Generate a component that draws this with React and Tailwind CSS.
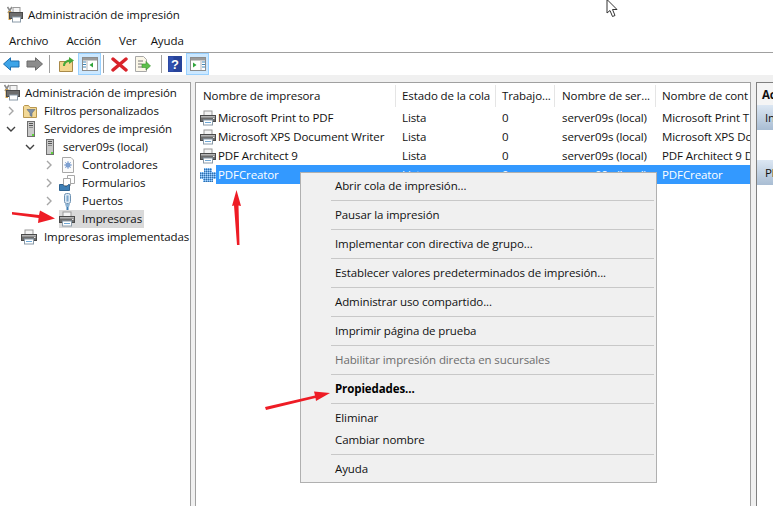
import React from "react";

const F = '[font-family:"Open_Sans","Noto_Sans",sans-serif]';

function Printer({ className = "" }) {
  return (
    <svg width="16" height="16" viewBox="0 0 16 16" className={className}>
      <rect x="4" y="1" width="8" height="5" fill="#f4f4f4" stroke="#9a9a9a" />
      <rect x="0.5" y="5.5" width="15" height="6" fill="#6d6d6d" stroke="#4a4a4a" />
      <rect x="1" y="6" width="14" height="1.5" fill="#b5b5b5" />
      <rect x="13" y="8" width="1.5" height="1" fill="#e5e5e5" />
      <rect x="3.5" y="10" width="9" height="5" fill="#ffffff" stroke="#8a9aa8" />
      <rect x="5" y="12" width="6" height="1" fill="#6fa8d6" />
    </svg>
  );
}

function PrinterSel() {
  return (
    <svg width="16" height="16" viewBox="0 0 16 16">
      <defs>
        <pattern id="dith" width="2" height="2" patternUnits="userSpaceOnUse">
          <rect width="2" height="2" fill="#5aa6ee" />
          <rect width="1" height="1" fill="#3f6f9f" />
          <rect x="1" y="1" width="1" height="1" fill="#b9d6f2" />
        </pattern>
      </defs>
      <rect x="4" y="1" width="8" height="5" fill="url(#dith)" />
      <rect x="0" y="5" width="16" height="7" fill="url(#dith)" />
      <rect x="3" y="11" width="10" height="4" fill="url(#dith)" />
    </svg>
  );
}

function Chevron({ open }) {
  return (
    <svg width="10" height="10" viewBox="0 0 10 10" fill="none" stroke={open ? "#404040" : "#a6a6a6"} strokeWidth="1.4">
      {open ? <path d="M1 3l4 4 4-4" /> : <path d="M3 1l4 4-4 4" />}
    </svg>
  );
}

function Server() {
  return (
    <svg width="16" height="16" viewBox="0 0 16 16">
      <rect x="6.5" y="0.5" width="7" height="15" fill="#c9c9c9" stroke="#6f6f6f" />
      <rect x="8" y="2" width="4" height="1" fill="#555" />
      <rect x="8" y="4" width="4" height="1" fill="#555" />
      <rect x="8" y="6" width="4" height="1" fill="#8a8a8a" />
      <rect x="11" y="13" width="2" height="2" fill="#5fd23c" />
    </svg>
  );
}

function RootIcon() {
  return (
    <svg width="16" height="18" viewBox="0 0 16 18">
      <path d="M0.5 1l4 6M5 1L1 7" stroke="#8a8a8a" strokeWidth="1.6" />
      <rect x="1.5" y="5" width="2.4" height="9" fill="#d9a441" />
      <rect x="6" y="1.5" width="7" height="5" fill="#f4f4f4" stroke="#9a9a9a" />
      <rect x="2.5" y="6.5" width="13" height="6" fill="#6d6d6d" stroke="#4a4a4a" />
      <rect x="5.5" y="11" width="8" height="5" fill="#fff" stroke="#8a9aa8" />
    </svg>
  );
}

function FilterFolder() {
  return (
    <svg width="16" height="16" viewBox="0 0 16 16">
      <path d="M2.5 3.5V14.5H15.5V4.5H9L7.5 2.5H3.5Z" fill="#f2d896" stroke="#b8974f" />
      <path d="M6 6.5h8L11 10v3.5L9 12.5V10Z" fill="#7e8fa6" stroke="#5c6b80" strokeWidth="0.6" />
    </svg>
  );
}

function DriversIcon() {
  return (
    <svg width="16" height="16" viewBox="0 0 16 16">
      <path d="M3.5 0.5H12L14.5 3V15.5H3.5Z" fill="#fbfbfb" stroke="#a8a8a8" />
      <circle cx="9" cy="8" r="2.6" fill="#7d9fd0" />
      <circle cx="9" cy="8" r="1" fill="#fff" />
      <path d="M9 4v8M5 8h8M6.2 5.2l5.6 5.6M11.8 5.2l-5.6 5.6" stroke="#7d9fd0" strokeWidth="0.9" />
    </svg>
  );
}

function FormsIcon() {
  return (
    <svg width="16" height="16" viewBox="0 0 16 16">
      <path d="M8.5 0.5H15.5V8.5H8.5Z" fill="#fff" stroke="#a8a8a8" />
      <path d="M4.5 3.5H11.5V10.5H4.5Z" fill="#fff" stroke="#a8a8a8" />
      <path d="M0.5 9.5H4L5.5 11.5H8L9.5 9.5H10.5V15.5H0.5Z" fill="#3f7fb5" stroke="#2f6391" />
    </svg>
  );
}

function PortIcon() {
  return (
    <svg width="16" height="17" viewBox="0 0 16 17">
      <rect x="5.5" y="0.5" width="6" height="10" rx="2" fill="#dce9f5" stroke="#6f93b3" />
      <rect x="7.5" y="2.5" width="2" height="6" fill="#7da7cc" />
      <path d="M6 11h5l-1 3H7Z" fill="#8fb4d3" />
      <rect x="7.5" y="14" width="2" height="3" fill="#3f7fb5" />
    </svg>
  );
}

function TreeRow({ indent, chevron, icon, label, selected }) {
  return (
    <div className="flex items-center h-[18px]" style={{ paddingLeft: indent }}>
      <span className="w-[10px] h-[10px] mr-[5px] flex items-center justify-center shrink-0">
        {chevron === "open" && <Chevron open />}
        {chevron === "closed" && <Chevron />}
      </span>
      <span className={`flex items-center h-[18px] whitespace-nowrap ${selected ? "bg-[#d9d9d9] pr-[2px]" : ""}`}>
        <span className="w-[16px] h-[16px] flex items-center justify-center shrink-0 mr-[7px]">{icon}</span>
        <span>{label}</span>
      </span>
    </div>
  );
}

function TB({ children, active }) {
  return (
    <span className={`w-[23px] h-[22px] flex items-center justify-center box-border ${active ? "bg-[#cce8ff] border border-[#99d1ff]" : ""}`}>
      {children}
    </span>
  );
}

function Pane({ side }) {
  return (
    <svg width="16" height="14" viewBox="0 0 16 14">
      <rect x="0.5" y="0.5" width="15" height="13" fill="#fff" stroke="#8c8c8c" />
      <rect x="1" y="1" width="14" height="2.5" fill="#9a9a9a" />
      {side === "left" ? (
        <>
          <path d="M1 5H4M1 7.5H4M1 10H4" stroke="#3f87b8" strokeWidth="1" />
          <path d="M11 5.5v5L7.5 8Z" fill="#2fa53c" />
        </>
      ) : (
        <>
          <path d="M12 5H15M12 7.5H15M12 10H15" stroke="#3f87b8" strokeWidth="1" />
          <path d="M3 5.5v5L6.5 8Z" fill="#2fa53c" />
        </>
      )}
      <path d={side === "left" ? "M5 4V13" : "M11 4V13"} stroke="#b5b5b5" />
    </svg>
  );
}

function Toolbar() {
  return (
    <div className="h-[22px] flex items-center bg-white">
      <TB>
        <svg width="17" height="14" viewBox="0 0 17 14">
          <path d="M0.5 7L7.5 0.8V4H16V10H7.5V13.2Z" fill="#3da4e8" stroke="#1d6fb0" />
        </svg>
      </TB>
      <TB>
        <svg width="17" height="14" viewBox="0 0 17 14">
          <path d="M16.5 7L9.5 0.8V4H1V10H9.5V13.2Z" fill="#8c8c8c" stroke="#6a6a6a" />
        </svg>
      </TB>
      <span className="w-px h-[18px] bg-[#a0a0a0] ml-[3px] mr-[5px]" />
      <TB>
        <svg width="16" height="16" viewBox="0 0 16 16">
          <path d="M0.5 5.5V15.5H13.5V5.5Z" fill="#f3d68f" stroke="#a98a49" />
          <path d="M4 10C4 6 7 4 10 3.5V1L15 4.5L10 8V6C8 6 6 7.5 6 10Z" fill="#46a83a" />
        </svg>
      </TB>
      <TB active>
        <Pane side="left" />
      </TB>
      <span className="w-px h-[18px] bg-[#a0a0a0] ml-[2px] mr-[4px]" />
      <TB>
        <svg width="17" height="15" viewBox="0 0 17 15">
          <path d="M2 2L15 13M15 2L2 13" stroke="#d9232a" strokeWidth="3.4" strokeLinecap="round" />
        </svg>
      </TB>
      <TB>
        <svg width="17" height="16" viewBox="0 0 17 16">
          <path d="M1.5 0.5H9.5L12.5 3.5V15.5H1.5Z" fill="#fbf7e8" stroke="#a8a8a8" />
          <path d="M4 5H9M4 8H8M4 11H8" stroke="#777" />
          <path d="M8 8H12V5.5L16.5 10L12 14V11.5H8Z" fill="#5cc04a" stroke="#3b8e2e" strokeWidth="0.6" />
        </svg>
      </TB>
      <span className="w-px h-[18px] bg-[#a0a0a0] ml-[7px] mr-[1px]" />
      <TB>
        <svg width="14" height="16" viewBox="0 0 14 16">
          <rect width="14" height="16" fill="#27439a" />
          <rect x="0.5" y="0.5" width="5" height="15" fill="#3a5bc0" opacity="0.6" />
          <text x="7" y="13" textAnchor="middle" fontSize="13" fontWeight="700" fill="#fff" fontFamily="Liberation Sans">?</text>
        </svg>
      </TB>
      <TB active>
        <Pane side="right" />
      </TB>
    </div>
  );
}

const rows = [
  ["Microsoft Print to PDF", "Microsoft Print T"],
  ["Microsoft XPS Document Writer", "Microsoft XPS Dc"],
  ["PDF Architect 9", "PDF Architect 9 D"],
];

function Item({ children, bold, disabled }) {
  return (
    <div className={`h-[22px] flex items-center pl-[34px] whitespace-nowrap ${bold ? "font-bold text-black" : ""} ${disabled ? "text-[#6d6d6d]" : ""}`}>
      {children}
    </div>
  );
}

function Sep() {
  return (
    <div className="h-[7px] flex items-center pl-[30px] pr-[2px]">
      <div className="h-px w-full bg-[#c8c8c8]" />
    </div>
  );
}

const Cols = "grid grid-cols-[19px_180px_100px_59px_101px_94px]";

export default function App() {
  return (
    <div className={`relative w-[773px] h-[506px] overflow-hidden bg-white flex flex-col text-[11.5px] tracking-[-0.1px] text-[#111] ${F}`}>
      <div className="h-[30px] flex items-center pl-[7px] shrink-0">
        <span className="mr-[5px]"><RootIcon /></span>
        <span>Administración de impresión</span>
      </div>
      <div className="h-[22px] flex items-center pl-[9px] shrink-0 border-b border-[#a0a0a0] box-content">
        <span className="mr-[18px]">Archivo</span>
        <span className="mr-[18px]">Acción</span>
        <span className="mr-[14px]">Ver</span>
        <span>Ayuda</span>
      </div>
      <Toolbar />
      <div className="flex-1 flex bg-[#f0f0f0] pt-[7px] min-h-0">
        <div className="w-[191px] shrink-0 bg-white border-t border-r border-[#a0a0a0] pt-[1px] overflow-hidden">
          <div className="flex items-center h-[18px] pl-[4px] whitespace-nowrap">
            <span className="mr-[5px]"><RootIcon /></span>
            <span>Administración de impresión</span>
          </div>
          <TreeRow indent={6} chevron="closed" icon={<FilterFolder />} label="Filtros personalizados" />
          <TreeRow indent={6} chevron="open" icon={<Server />} label="Servidores de impresión" />
          <TreeRow indent={25} chevron="open" icon={<Server />} label="server09s (local)" />
          <TreeRow indent={44} chevron="closed" icon={<DriversIcon />} label="Controladores" />
          <TreeRow indent={44} chevron="closed" icon={<FormsIcon />} label="Formularios" />
          <TreeRow indent={44} chevron="closed" icon={<PortIcon />} label="Puertos" />
          <TreeRow indent={44} icon={<Printer />} label="Impresoras" selected />
          <TreeRow indent={6} icon={<Printer />} label="Impresoras implementadas" />
        </div>
        <div className="w-[4px] shrink-0" />
        <div className="w-[556px] shrink-0 bg-white border-t border-x border-[#a0a0a0] overflow-hidden pl-[1px]">
          <div className={`${Cols} h-[24px] pt-[2px] items-center whitespace-nowrap`}>
            <span className="col-span-2 pl-[6px] h-full flex items-center border-r border-[#e5e5e5]">Nombre de impresora</span>
            <span className="pl-[6px] h-full flex items-center border-r border-[#e5e5e5] overflow-hidden">Estado de la cola</span>
            <span className="pl-[6px] h-full flex items-center border-r border-[#e5e5e5] overflow-hidden">Trabajo...</span>
            <span className="pl-[7px] h-full flex items-center border-r border-[#e5e5e5] overflow-hidden">Nombre de ser...</span>
            <span className="pl-[6px] h-full flex items-center overflow-hidden">Nombre de cont</span>
          </div>
          <div className="mt-[1px]">
            {rows.map(([n, c]) => (
              <div key={n} className={`${Cols} h-[19px] items-center whitespace-nowrap`}>
                <span className="pl-[3px] flex"><Printer /></span>
                <span className="pl-[2px]">{n}</span>
                <span className="pl-[6px]">Lista</span>
                <span className="pl-[6px]">0</span>
                <span className="pl-[7px]">server09s (local)</span>
                <span className="pl-[6px] overflow-hidden">{c}</span>
              </div>
            ))}
            <div className={`${Cols} h-[19px] items-center whitespace-nowrap`}>
              <span className="pl-[3px] flex"><PrinterSel /></span>
              <span className="col-span-5 bg-[#3399ff] text-white h-full flex items-center pl-[2px]">
                <span className="w-[180px] shrink-0">PDFCreator</span>
                <span className="w-[100px] shrink-0 pl-[4px]">Lista</span>
                <span className="w-[59px] shrink-0 pl-[4px]">0</span>
                <span className="w-[101px] shrink-0 pl-[5px]">server09s (local)</span>
                <span className="pl-[4px]">PDFCreator</span>
              </span>
            </div>
          </div>
        </div>
        <div className="w-[5px] shrink-0" />
        <div className="flex-1 bg-white border-t border-l border-[#808080] overflow-hidden whitespace-nowrap">
          <div className="h-[22px] pl-[5px] pt-[2px] flex items-center font-bold bg-[#f5f5f5]">Acc</div>
          <div className="h-[25px] pl-[8px] flex items-center bg-gradient-to-b from-[#dce7f3] to-[#a9bdd3]">In</div>
          <div className="h-[30px]" />
          <div className="h-[25px] pl-[8px] flex items-center bg-gradient-to-b from-[#dce7f3] to-[#a9bdd3]">Pl</div>
        </div>
      </div>

      {/* context menu */}
      <div className="absolute left-[300px] top-[172px] w-[357px] h-[311px] bg-[#f0f0f0] border border-[#b0b0b0] pt-[2px] text-[#111]">
        <Item>Abrir cola de impresión...</Item>
        <Sep />
        <Item>Pausar la impresión</Item>
        <Sep />
        <Item>Implementar con directiva de grupo...</Item>
        <Sep />
        <Item>Establecer valores predeterminados de impresión...</Item>
        <Sep />
        <Item>Administrar uso compartido...</Item>
        <Sep />
        <Item>Imprimir página de prueba</Item>
        <Sep />
        <Item disabled>Habilitar impresión directa en sucursales</Item>
        <Sep />
        <Item bold>Propiedades...</Item>
        <Sep />
        <Item>Eliminar</Item>
        <Item>Cambiar nombre</Item>
        <Sep />
        <Item>Ayuda</Item>
      </div>

      {/* annotations */}
      <svg className="absolute left-0 top-0 pointer-events-none" width="773" height="506" viewBox="0 0 773 506">
        <path d="M12 212L39 215L40 210.5L55 218.5L38 223L38.6 218L12 214.5Z" fill="#ee1c25" />
        <path d="M236.5 190L241 206L238.5 205.5L239.5 245L237 245L234 205.5L232 206Z" fill="#ee1c25" />
        <path d="M265 407L315 395.5L314 391.5L330 393L316 401L315.5 398L266 410Z" fill="#ee1c25" />
        <path d="M607 0V13L610 10.5L612.5 16.5L615 15.5L612.5 9.5L617 9.5L607.5 0Z" fill="#fff" stroke="#333" strokeWidth="1" />
      </svg>
    </div>
  );
}
